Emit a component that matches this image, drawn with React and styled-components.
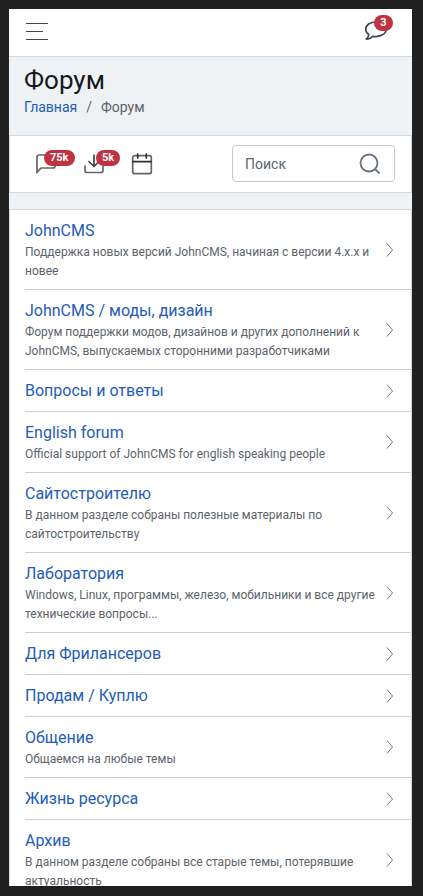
import React from "react";
import styled, { createGlobalStyle } from "styled-components";

const GlobalStyle = createGlobalStyle`
  *, *::before, *::after { box-sizing: border-box; }
  body { margin: 0; background: #202020; }
  body, button, input { font-family: Roboto, "Noto Sans", sans-serif; }
`;

const Frame = styled.div`
  height: 100vh;
  padding: 9px 11px 10px 9px;
  background: #202020;
`;

const Screen = styled.div`
  height: 100%;
  overflow: hidden;
  background: #eef2f5;
  color: #15191d;
`;

const TopBar = styled.header`
  display: flex;
  align-items: center;
  justify-content: space-between;
  height: 48px;
  padding: 0 16px 1px;
  background: #fff;
  border-bottom: 1px solid #d5d9dd;
`;

const IconButton = styled.button`
  position: relative;
  display: flex;
  align-items: center;
  justify-content: center;
  width: 24px;
  height: 24px;
  padding: 0;
  border: 0;
  background: none;
  color: ${({ $tone }) => $tone || "#666"};
  cursor: pointer;

  svg { display: block; flex: none; }
`;

const MessagesButton = styled(IconButton)`
  margin-right: 8px;
`;

const Badge = styled.span`
  position: absolute;
  left: ${({ $left }) => $left || "10px"};
  top: ${({ $top }) => $top || "-2px"};
  min-width: 19px;
  padding: 0 6px;
  border-radius: 8px;
  background: #c0323f;
  color: #fff;
  font-size: 11px;
  font-weight: 700;
  line-height: 16px;
`;

const PageHead = styled.div`
  padding: 7px 15px 17px;
`;

const Title = styled.h1`
  margin: 0;
  font-size: 26px;
  font-weight: 400;
  line-height: 33px;
`;

const Crumbs = styled.nav`
  display: flex;
  gap: 9px;
  font-size: 14px;
  line-height: 21px;
  color: #5c646b;
`;

const CrumbLink = styled.a`
  color: #245cb6;
  text-decoration: none;
`;

const Toolbar = styled.div`
  display: flex;
  align-items: center;
  justify-content: space-between;
  height: 58px;
  padding: 0 16px 0 24px;
  background: #fff;
  border: 1px solid #d5dae0;
`;

const Tools = styled.div`
  display: flex;
  gap: 24px;
`;

const Search = styled.form`
  display: flex;
  align-items: center;
  width: 163px;
  height: 37px;
  margin-bottom: 1px;
  padding-right: 12px;
  border: 1px solid #c3c9d1;
  border-radius: 4px;
  background: #fff;
`;

const SearchInput = styled.input`
  flex: 1;
  min-width: 0;
  height: 100%;
  padding: 0 12px;
  border: 0;
  outline: 0;
  background: none;
  font-size: 14px;
  color: #495057;

  &::placeholder { color: #5c646d; opacity: 1; }
`;

const List = styled.ul`
  margin: 16px 0 0;
  padding: 0 0 0 15px;
  list-style: none;
  background: #fff;
  border: 1px solid #d5dae0;
`;

const Item = styled.li`
  display: flex;
  align-items: center;
  justify-content: space-between;
  padding: 8px 17px 8px 0;
  border-bottom: 1px solid #cccfd2;
  color: #727981;

  svg { display: block; flex: none; }
`;

const ItemText = styled.div`
  flex: 1;
  min-width: 0;
  padding-right: 8px;
`;

const ItemLink = styled.a`
  display: block;
  font-size: 16px;
  line-height: 25px;
  color: #245cb6;
  text-decoration: none;
`;

const Description = styled.p`
  margin: 0;
  font-size: 12px;
  line-height: 19px;
  color: #5c646b;
`;

const MenuIcon = () => (
  <svg width="22" height="18" viewBox="0 0 22 18" stroke="#444" fill="none" aria-hidden="true">
    <path d="M0 .5H22M0 8.5H17M0 16.5H22" />
  </svg>
);

const BubbleIcon = () => (
  <svg width="24" height="24" viewBox="0 0 24 24" fill="none" stroke="currentColor" strokeWidth="1.7" strokeLinejoin="round" aria-hidden="true">
    <path d="M12 2C6 2 1.8 5.1 1.8 9.2c0 2.300 1.200 4.100 3 5.200 0 1.700-.6 3.100-2.600 4.600 2.700.4 5-.8 6.500-2.700 7 1.200 13.500-2 13.500-7.100C22.200 5.100 18 2 12 2Z" />
  </svg>
);

const TopicIcon = () => (
  <svg width="24" height="24" viewBox="0 0 24 24" fill="none" stroke="currentColor" strokeWidth="1.7" strokeLinejoin="round" aria-hidden="true">
    <path d="M21 14a2 2 0 0 1-2 2H7l-4 4.500V5a2 2 0 0 1 2-2h14a2 2 0 0 1 2 2Z" />
  </svg>
);

const DownloadIcon = () => (
  <svg width="24" height="24" viewBox="0 0 24 24" fill="none" stroke="currentColor" strokeWidth="1.7" strokeLinecap="round" strokeLinejoin="round" aria-hidden="true">
    <path d="M3 14v4.500a2 2 0 0 0 2 2h14a2 2 0 0 0 2-2V14" />
    <path d="M7 9.500l5 5 5-5M12 14.500V3" stroke="#444" />
  </svg>
);

const CalendarIcon = () => (
  <svg width="24" height="24" viewBox="0 0 24 24" fill="none" stroke="currentColor" strokeWidth="1.7" strokeLinecap="round" aria-hidden="true">
    <rect x="2.7" y="3.7" width="18.6" height="18" rx="2" />
    <path d="M2.700 9.700h18.600M7.700 2v4M16.300 2v4" stroke="#333" />
  </svg>
);

const SearchIcon = () => (
  <svg width="22" height="22" viewBox="0 0 22 22" fill="none" stroke="currentColor" strokeWidth="1.8" aria-hidden="true">
    <circle cx="10" cy="10" r="8.5" />
    <path d="M16 16l4.500 4.500" />
  </svg>
);

const Chevron = () => (
  <svg width="8" height="14" viewBox="0 0 8 14" fill="none" stroke="currentColor" aria-hidden="true">
    <path d="M1 .5l5.500 6.500L1 13.500" />
  </svg>
);

const sections = [
  { title: "JohnCMS", text: "Поддержка новых версий JohnCMS, начиная с версии 4.x.x и новее" },
  { title: "JohnCMS / моды, дизайн", text: "Форум поддержки модов, дизайнов и других дополнений к JohnCMS, выпускаемых сторонними разработчиками" },
  { title: "Вопросы и ответы" },
  { title: "English forum", text: "Official support of JohnCMS for english speaking people" },
  { title: "Сайтостроителю", text: "В данном разделе собраны полезные материалы по сайтостроительству" },
  { title: "Лаборатория", text: "Windows, Linux, программы, железо, мобильники и все другие технические вопросы..." },
  { title: "Для Фрилансеров" },
  { title: "Продам / Куплю" },
  { title: "Общение", text: "Общаемся на любые темы" },
  { title: "Жизнь ресурса" },
  { title: "Архив", text: "В данном разделе собраны все старые темы, потерявшие актуальность" },
];

export default function App() {
  return (
    <Frame>
      <GlobalStyle />
      <Screen>
        <TopBar>
          <IconButton type="button" aria-label="Меню"><MenuIcon /></IconButton>
          <MessagesButton type="button" aria-label="Сообщения" $tone="#3c4752">
            <BubbleIcon />
            <Badge $top="-5px">3</Badge>
          </MessagesButton>
        </TopBar>
        <main>
          <PageHead>
            <Title>Форум</Title>
            <Crumbs>
              <CrumbLink href="#home">Главная</CrumbLink>
              <span>/</span>
              <span>Форум</span>
            </Crumbs>
          </PageHead>
          <Toolbar>
            <Tools>
              <IconButton type="button" aria-label="Темы"><TopicIcon /><Badge>75k</Badge></IconButton>
              <IconButton type="button" aria-label="Файлы"><DownloadIcon /><Badge $left="14px">5k</Badge></IconButton>
              <IconButton type="button" aria-label="Календарь"><CalendarIcon /></IconButton>
            </Tools>
            <Search role="search">
              <SearchInput type="text" placeholder="Поиск" aria-label="Поиск" />
              <IconButton type="submit" aria-label="Найти" $tone="#6c757d"><SearchIcon /></IconButton>
            </Search>
          </Toolbar>
          <List>
            {sections.map(({ title, text }) => (
              <Item key={title}>
                <ItemText>
                  <ItemLink href="#section">{title}</ItemLink>
                  {text && <Description>{text}</Description>}
                </ItemText>
                <Chevron />
              </Item>
            ))}
          </List>
        </main>
      </Screen>
    </Frame>
  );
}
